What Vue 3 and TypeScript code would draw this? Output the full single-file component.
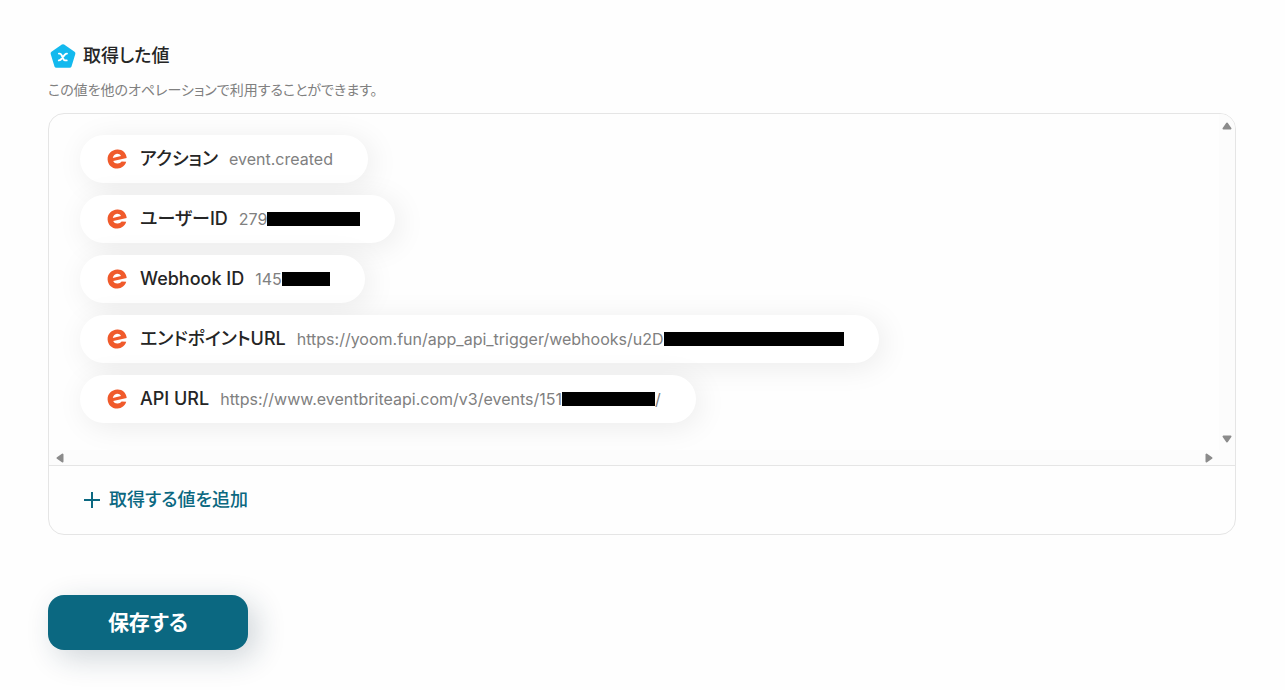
<script setup lang="ts">
interface OutputValue {
  label: string
  value: string
  masked?: 'small' | 'medium' | 'large'
  suffix?: string
}

const values: OutputValue[] = [
  { label: 'アクション', value: 'event.created' },
  { label: 'ユーザーID', value: '279', masked: 'medium' },
  { label: 'Webhook ID', value: '145', masked: 'small' },
  {
    label: 'エンドポイントURL',
    value: 'https://yoom.fun/app_api_trigger/webhooks/u2D',
    masked: 'large',
  },
  {
    label: 'API URL',
    value: 'https://www.eventbriteapi.com/v3/events/151',
    masked: 'medium',
    suffix: '/',
  },
]
</script>

<template>
  <main class="page">
    <header class="heading">
      <svg class="heading-icon" viewBox="0 0 28 28" aria-hidden="true">
        <path d="M14 4.2 L24.4 11.3 L20.6 23.8 H7.4 L3.6 11.3 Z" fill="#13b9ee" stroke="#13b9ee" stroke-width="4" stroke-linejoin="round" />
        <path d="M9.9 11.6 h.8 c.9 0 1.2.3 1.6 1.1 l2.3 4.6 c.4.8.8 1.1 1.6 1.1 h1.5 M18 11.6 c-.9 0-1.4.3-2.1 1.1 l-3.9 4.6 c-.7.8-1.2 1.1-2.2 1.1" fill="none" stroke="#fff" stroke-width="1.9" stroke-linecap="round" />
      </svg>
      <h2 class="title">取得した値</h2>
    </header>
    <p class="description">この値を他のオペレーションで利用することができます。</p>

    <section class="panel">
      <div class="viewport">
        <ul class="values">
          <li v-for="item in values" :key="item.label" class="pill">
            <svg class="brand" viewBox="0 0 20 20" aria-hidden="true">
              <path d="M10.2 .5 C15.2 .2 19.2 3.7 19.7 8.9 L6.2 12 C7 13.8 8.7 14.7 10.8 14.5 C12.4 14.4 13.7 13.7 14.6 12.5 L19.2 12.8 C18.1 16.8 14.7 19.3 10.6 19.5 C5.1 19.8 .8 15.7 .6 10.4 C.4 5 4.6 .8 10.2 .5 Z" fill="#f05a2b" />
              <path d="M5.8 8.9 C6.3 6.5 7.9 5 10 4.8 C11.7 4.7 13.2 5.5 14 7 Z" fill="#fff" />
            </svg>
            <span class="label">{{ item.label }}</span>
            <span class="value">
              <span>{{ item.value }}</span>
              <span v-if="item.masked" class="mask" :class="item.masked"></span>
              <span v-if="item.suffix">{{ item.suffix }}</span>
            </span>
          </li>
        </ul>
        <div class="track vertical" aria-hidden="true">
          <svg viewBox="0 0 10 8"><path d="M5 1.5 L8.5 6.5 H1.5 Z" /></svg>
          <svg viewBox="0 0 10 8"><path d="M5 6.5 L1.5 1.5 H8.5 Z" /></svg>
        </div>
        <div class="track horizontal" aria-hidden="true">
          <svg viewBox="0 0 8 10"><path d="M1.5 5 L6.5 1.5 V8.5 Z" /></svg>
          <svg viewBox="0 0 8 10"><path d="M6.5 5 L1.5 1.5 V8.5 Z" /></svg>
        </div>
        <div class="corner" aria-hidden="true"></div>
      </div>
      <footer class="panel-footer">
        <button type="button" class="add">
          <svg viewBox="0 0 16 16" aria-hidden="true"><path d="M8 0 V16 M0 8 H16" /></svg>
          取得する値を追加
        </button>
      </footer>
    </section>

    <button type="button" class="save">保存する</button>
  </main>
</template>

<style>
body {
  margin: 0;
  background: #fefefe;
}
</style>

<style scoped>
.page {
  box-sizing: border-box;
  padding: 42px 49px 40px 48px;
  color: #252525;
  font-family: Inter, "Noto Sans CJK JP", sans-serif;
  font-feature-settings: "palt";
}

.heading {
  display: flex;
  align-items: center;
  gap: 6px;
  height: 28px;
}

.heading-icon {
  width: 28px;
  height: 28px;
  margin-left: 1px;
}

.title {
  margin: 0;
  font-size: 18px;
  font-weight: 500;
  line-height: 24px;
}

.description {
  margin: 10px 0 13px;
  color: #808080;
  font-size: 14px;
  line-height: 20px;
}

.panel {
  overflow: hidden;
  border: 1px solid #e5e5e5;
  border-radius: 16px;
}

.viewport {
  display: grid;
  grid-template-columns: 1fr 16px;
  grid-template-rows: auto 15px;
  border-bottom: 1px solid #e5e5e5;
}

.values {
  display: flex;
  flex-direction: column;
  align-items: flex-start;
  gap: 12px;
  min-width: 0;
  margin: 0;
  padding: 21px 31px 27px;
  overflow: hidden;
  list-style: none;
}

.pill {
  display: flex;
  align-items: center;
  box-sizing: border-box;
  height: 48px;
  padding: 0 35px 0 27px;
  border-radius: 24px;
  background: #fff;
  box-shadow: 4px 4px 30px rgba(0, 0, 0, 0.08);
  white-space: nowrap;
}

.brand {
  width: 20px;
  height: 20px;
  margin-right: 13px;
}

.label {
  margin-right: 11px;
  font-size: 18px;
  font-weight: 500;
  line-height: 24px;
}

.value {
  display: flex;
  align-items: center;
  color: #808080;
  font-size: 16px;
  line-height: 24px;
}

.mask {
  height: 14px;
  background: #000;
}

.small {
  width: 48px;
}

.medium {
  width: 93px;
}

.large {
  width: 180px;
}

.track {
  display: flex;
  justify-content: space-between;
  align-items: center;
  background: #fcfcfc;
}

.corner {
  background: #fcfcfc;
}

.track svg {
  fill: #8b8b8b;
  stroke: #8b8b8b;
  stroke-width: 2;
  stroke-linejoin: round;
}

.vertical {
  flex-direction: column;
  padding: 8px 0 7px;
}

.vertical svg {
  width: 10px;
  height: 8px;
}

.horizontal {
  padding: 0 6px 0 7px;
}

.horizontal svg {
  width: 8px;
  height: 10px;
}

.panel-footer {
  display: flex;
  align-items: center;
  height: 68px;
  padding-left: 35px;
}

button {
  border: 0;
  font-family: inherit;
  font-feature-settings: inherit;
  cursor: pointer;
}

.add {
  display: flex;
  align-items: center;
  gap: 9px;
  padding: 0;
  background: none;
  color: #0b6881;
  font-size: 18px;
  font-weight: 500;
  line-height: 24px;
}

.add svg {
  width: 16px;
  height: 16px;
  stroke: #0b6881;
  stroke-width: 2;
}

.save {
  display: block;
  width: 200px;
  height: 55px;
  margin-top: 60px;
  padding: 0;
  border-radius: 16px;
  background: #0b6881;
  box-shadow: 8px 8px 30px rgba(20, 50, 70, 0.2);
  color: #fff;
  font-size: 21px;
  font-weight: 700;
  line-height: 28px;
}
</style>
